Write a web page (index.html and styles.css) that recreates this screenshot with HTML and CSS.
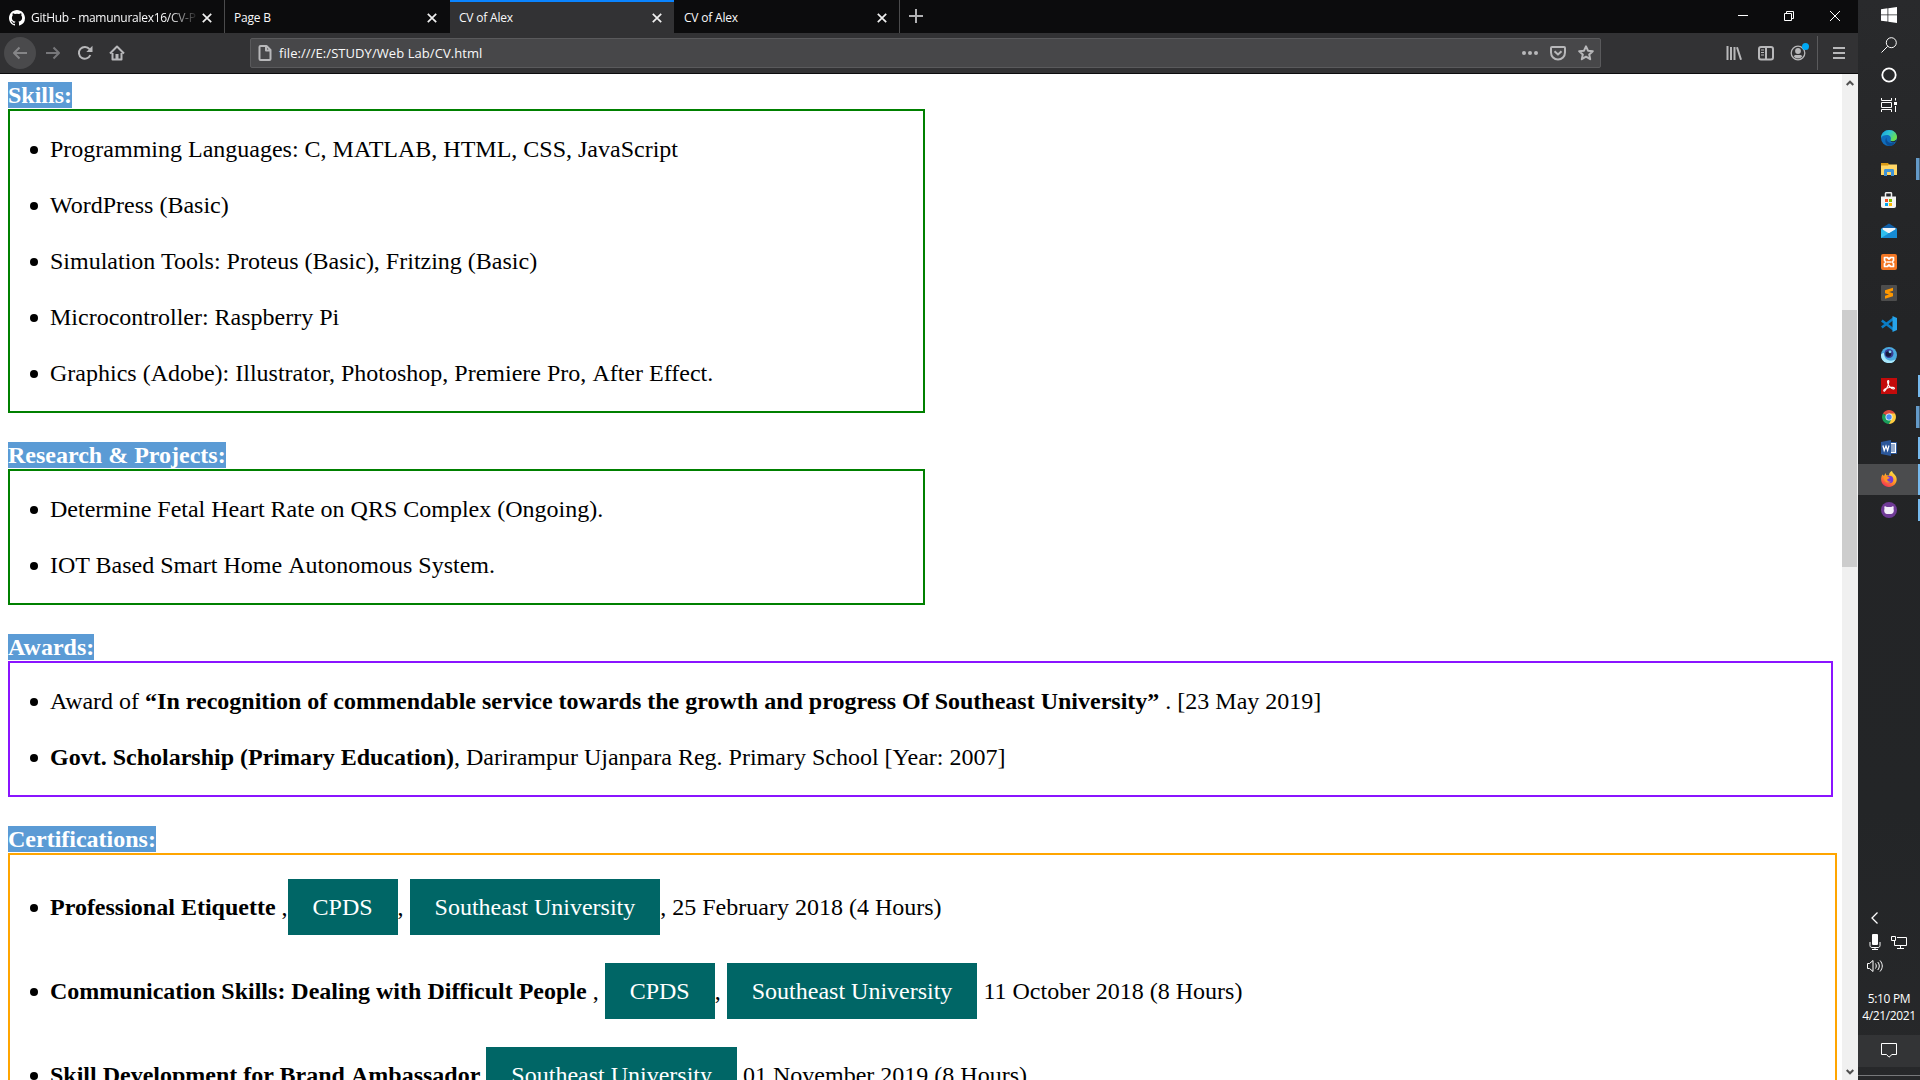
FILE: index.html
```html
<!DOCTYPE html>
<html lang="en">
<head>
<meta charset="utf-8">
<title>CV of Alex</title>
<link rel="stylesheet" href="styles.css">
</head>
<body>
<div class="screen">
  <div class="browser">
    <header class="tabs">
      <div class="tab">
        <svg class="tab-logo" viewBox="0 0 16 16"><path fill="#fff" fill-rule="evenodd" d="M8 0C3.6 0 0 3.6 0 8c0 3.5 2.3 6.5 5.5 7.6.4.1.5-.2.5-.4v-1.4c-2.2.5-2.7-1-2.7-1-.4-.9-.9-1.2-.9-1.2-.7-.5.1-.5.1-.5.8.1 1.2.8 1.2.8.7 1.3 1.9.9 2.3.7.1-.5.3-.9.5-1.1-1.8-.2-3.6-.9-3.6-4 0-.9.3-1.6.8-2.1-.1-.2-.4-1 .1-2.1 0 0 .7-.2 2.2.8a7.6 7.6 0 0 1 4 0c1.5-1 2.2-.8 2.2-.8.4 1.1.2 1.9.1 2.1.5.6.8 1.3.8 2.1 0 3.1-1.9 3.8-3.7 4 .3.3.6.8.6 1.5v2.2c0 .2.1.5.6.4A8 8 0 0 0 16 8c0-4.4-3.6-8-8-8z"/></svg>
        <span class="tab-title fade">GitHub - mamunuralex16/CV-P</span>
        <svg class="tab-close" viewBox="0 0 10 10"><path d="M.8.8l8.4 8.4M9.2.8L.8 9.2"/></svg>
      </div>
      <div class="tab divided">
        <span class="tab-title">Page B</span>
        <svg class="tab-close" viewBox="0 0 10 10"><path d="M.8.8l8.4 8.4M9.2.8L.8 9.2"/></svg>
      </div>
      <div class="tab active">
        <span class="tab-title">CV of Alex</span>
        <svg class="tab-close" viewBox="0 0 10 10"><path d="M.8.8l8.4 8.4M9.2.8L.8 9.2"/></svg>
      </div>
      <div class="tab last">
        <span class="tab-title">CV of Alex</span>
        <svg class="tab-close" viewBox="0 0 10 10"><path d="M.8.8l8.4 8.4M9.2.8L.8 9.2"/></svg>
      </div>
      <svg class="new-tab" viewBox="0 0 14 14"><path d="M7 0v14M0 7h14"/></svg>
      <div class="window-buttons">
        <svg viewBox="0 0 10 10"><path d="M0 4.5h10"/></svg>
        <svg viewBox="0 0 10 10"><path d="M.5 2.5h7v7h-7zM2.5 2.5v-2h7v7h-2"/></svg>
        <svg viewBox="0 0 10 10"><path d="M0 0l10 10M10 0L0 10"/></svg>
      </div>
    </header>

    <nav class="toolbar">
      <span class="back"><svg class="icon" viewBox="0 0 16 16"><path stroke="#858587" d="M15 8H2M7.500 2.500L2 8l5.500 5.500"/></svg></span>
      <svg class="icon forward" viewBox="0 0 16 16"><path stroke="#77777a" d="M1 8h13M8.500 2.500L14 8l-5.500 5.500"/></svg>
      <svg class="icon reload" viewBox="0 0 16 16"><path d="M13.300 10A5.900 5.900 0 1 1 12.500 4.200"/><path class="solid" d="M15.500.8v6.200H9.300z"/></svg>
      <svg class="icon home" viewBox="0 0 16 16"><path d="M1 8.500L8 1.500l7 7M3.500 8v6.500h9V8"/><path class="solid" d="M6.500 9h3v5.500h-3z"/></svg>
      <div class="urlbar">
        <svg class="icon page" viewBox="0 0 16 16"><path d="M3.500 1h6l4 4v9c0 .6-.4 1-1 1h-9c-.6 0-1-.4-1-1V2c0-.6.4-1 1-1zM9 1v4.500h4.500"/></svg>
        <span class="url">file:///E:/STUDY/Web Lab/CV.html</span>
        <svg class="icon" viewBox="0 0 16 16"><circle class="solid" cx="2" cy="8" r="2"/><circle class="solid" cx="8" cy="8" r="2"/><circle class="solid" cx="14" cy="8" r="2"/></svg>
        <svg class="icon" viewBox="0 0 16 16"><path d="M2 2h12c.6 0 1 .4 1 1v4.500a7 7 0 0 1-14 0V3c0-.6.4-1 1-1zM4.500 6.300L8 9.600l3.500-3.300"/></svg>
        <svg class="icon" viewBox="0 0 16 16"><path d="M8 1.300l2 4.400 4.800.5-3.600 3.200 1 4.800L8 11.700l-4.200 2.500 1-4.800L1.200 6.200 6 5.700z"/></svg>
      </div>
      <div class="tools">
        <svg class="icon" viewBox="0 0 16 16"><path d="M1.500 1v14M5 2v13M8.500 2v13M11 2.200l4 12.600"/></svg>
        <svg class="icon" viewBox="0 0 16 16"><rect x="1" y="2" width="14" height="12.500" rx="2"/><path d="M8 2v12.500"/><path stroke-width="1" d="M3 5h3M3 7.500h3M3 10h3"/></svg>
        <span class="account">
          <svg class="icon" viewBox="0 0 16 16"><circle cx="8" cy="8" r="6.800" stroke-width="1.300"/><circle class="solid" cx="8" cy="6" r="2.900"/><path class="solid" d="M3.600 11.200c1.200-1.800 2.600-1.200 4.400-1.200s3.200-.6 4.400 1.200A5.400 5.400 0 0 1 8 13.400a5.400 5.400 0 0 1-4.400-2.200z"/></svg>
          <i class="account-dot"></i>
        </span>
        <span class="tool-divider"></span>
        <svg class="icon menu" viewBox="0 0 12 12"><path d="M0 1h12M0 6h12M0 11h12"/></svg>
      </div>
    </nav>

    <div class="viewport">
      <main class="document">
        <h2><mark>Skills:</mark></h2>
        <ul class="box green">
          <li>Programming Languages: C, MATLAB, HTML, CSS, JavaScript</li>
          <li>WordPress (Basic)</li>
          <li>Simulation Tools: Proteus (Basic), Fritzing (Basic)</li>
          <li>Microcontroller: Raspberry Pi</li>
          <li>Graphics (Adobe): Illustrator, Photoshop, Premiere Pro, <span class="unkern">After</span> Effect.</li>
        </ul>
        <h2><mark>Research &amp; Projects:</mark></h2>
        <ul class="box green">
          <li>Determine Fetal Heart Rate on QRS Complex (Ongoing).</li>
          <li>IOT Based Smart Home <span class="unkern">Autonomous</span> System.</li>
        </ul>
        <h2><mark>Awards:</mark></h2>
        <ul class="box purple">
          <li>Award of <b>“In recognition of commendable service towards the growth and progress Of Southeast University”</b> . [23 May 2019]</li>
          <li><b>Govt. Scholarship (Primary Education)</b>, Darirampur Ujanpara Reg. Primary School [Year: 2007]</li>
        </ul>
        <h2><mark>Certifications:</mark></h2>
        <ul class="box orange">
          <li><b>Professional Etiquette</b> ,<a class="link">CPDS</a>, <a class="link">Southeast University</a>, 25 February 2018 (4 Hours)</li>
          <li><b>Communication Skills: Dealing with Difficult People</b> , <a class="link">CPDS</a>, <a class="link">Southeast University</a> 11 October 2018 (8 Hours)</li>
          <li><b>Skill Development for Brand <span class="unkern">Ambassador</span></b> <a class="link">Southeast University</a> 01 November 2019 (8 Hours)</li>
        </ul>
      </main>
      <div class="scrollbar">
        <svg viewBox="0 0 8 6"><path d="M.7 5L4 1.700 7.300 5"/></svg>
        <span class="thumb"></span>
        <svg viewBox="0 0 8 6"><path d="M.7 1L4 4.300 7.300 1"/></svg>
      </div>
    </div>
  </div>

  <aside class="taskbar">
    <div class="system">
      <svg viewBox="0 0 16 16"><path fill="#fff" d="M0 2.200L6.500 1.300v6.200H0zM7.300 1.200L16 0v7.500H7.300zM0 8.300h6.500v6.200L0 13.700zM7.300 8.300H16V16l-8.700-1.300z"/></svg>
      <svg class="line" viewBox="0 0 16 16"><circle cx="10.300" cy="5.700" r="5"/><path d="M6.700 9.300L.5 15.500"/></svg>
      <svg class="line" viewBox="0 0 16 16"><circle cx="8" cy="8" r="6.700" stroke-width="1.800"/></svg>
      <svg class="line" viewBox="0 0 16 16"><path d="M.5 1v2.500h10V1M.5 15v-2.500h10V15M.5 5.500h10v5H.5zM14.500 1v2.500M14.500 9v6"/><path fill="#fff" stroke="none" d="M13 5h3v3h-3z"/></svg>
    </div>
    <div class="apps">
      <div class="app"><svg viewBox="0 0 16 16"><defs><linearGradient id="eg" x1="0" y1="0" x2="1" y2=".5"><stop offset="0" stop-color="#159edb"/><stop offset=".5" stop-color="#2dc2d4"/><stop offset="1" stop-color="#6be04d"/></linearGradient></defs><circle cx="8" cy="8" r="8" fill="#0f6dbd"/><path fill="url(#eg)" d="M0 8C.2 3 4 0 8 0c5 0 8 3.500 8 7 0 3-2.500 4.200-4.700 4.200-1.600 0-2.300-.7-1.500-1.700C10.500 7 8.500 5 6 5 3 5 .8 6.300 0 8z"/><path fill="#0b4d94" d="M5.500 7.500c-.5 4 3 6 6.500 5.500 1 0 2-.5 2.500-.7C13 14.700 10.500 16 8.500 16 5 15 3 11 5.500 7.500z"/><path fill="#252628" d="M15 11.300c-2 1.600-5 1.200-5.500-.5.600.6 3.800 1 6.200-1.300z"/></svg></div>
      <div class="app stacked"><svg viewBox="0 0 16 16"><path fill="#d99a16" d="M0 2h7l1.500 2H16v4H0z"/><path fill="#ffd767" d="M0 4.500h7L8 3.500h8V14H0z"/><path fill="#3f93d8" d="M3 9.500C3 8.700 3.500 8 4.500 8h7c1 0 1.500.7 1.500 1.500V15h-3v-4H6v4H3z"/></svg></div>
      <div class="app"><svg viewBox="0 0 16 16"><path fill="none" stroke="#eee" stroke-width="1.500" d="M4.500 5V1.500c0-.5.300-.8.800-.8h4.400c.5 0 .8.300.8.800V5"/><path fill="#f3f3f3" d="M0 4.500h15V14c0 1-.6 2-2 2H2c-1.400 0-2-1-2-2z"/><path fill="#f25022" d="M4 7h3v3H4z"/><path fill="#7fba00" d="M8 7h3v3H8z"/><path fill="#00a4ef" d="M4 11h3v3H4z"/><path fill="#ffb900" d="M8 11h3v3H8z"/></svg></div>
      <div class="app"><svg viewBox="0 0 16 16"><path fill="#1260a8" d="M0 5.500L8 .5l8 5V10H0z"/><path fill="#f2f5f8" d="M1.500 5h13v5h-13z"/><path fill="#2fc0f0" d="M0 5.500l8 5 8-5V15H0z"/><path fill="#168bd3" d="M0 15L16 5.500V15z"/></svg></div>
      <div class="app"><svg viewBox="0 0 16 16"><rect width="16" height="16" rx="2" fill="#f37623"/><path fill="none" stroke="#fff" stroke-width="1.700" stroke-linejoin="round" d="M3.500 3.500h2.800L8 5l1.700-1.500h2.800v3L11 8l1.500 1.500v3H9.700L8 11l-1.700 1.500H3.500v-3L5 8 3.500 6.500zM6 8h4"/></svg></div>
      <div class="app"><svg viewBox="0 0 16 16"><rect width="16" height="16" rx="1" fill="#4d4d4d"/><path fill="#ff9800" d="M4 5.200L12 2.700v3L8 7l4 1.300v3L4 13.700v-3L8 9.500 4 8.200z"/></svg></div>
      <div class="app"><svg viewBox="0 0 16 16"><path fill="none" stroke="#0b7dc5" stroke-width="2.600" d="M12.500 2.500L.8 11.500M.8 4.500l11.700 9"/><path fill="#27a3ea" d="M11.500 0L16 2v12l-4.500 2z"/></svg></div>
      <div class="app"><svg viewBox="0 0 16 16"><circle cx="8" cy="8" r="8" fill="#4ba9df"/><path fill="#a9e8fb" d="M0 8a8 8 0 0 0 15 4c-3 2-6 2-8 1C4 12 3 9 3 6 1 6 0 7 0 8z"/><circle cx="8" cy="6.500" r="4.500" fill="#3b3f94"/><circle cx="7.500" cy="7" r="2.800" fill="#17183a"/><circle cx="9" cy="4.800" r="1.400" fill="#80d8f5"/></svg></div>
      <div class="app open"><svg viewBox="0 0 16 16"><path fill="#c30b0b" d="M0 0h16v16H0z"/><path fill="none" stroke="#fff" stroke-width="1.100" d="M7.300 2.500c-1.200 0-.8 2.500.2 4.500 1.500 3 4.500 4.500 5.700 3.700 1.300-1.200-3-1.900-6-1-3 .8-5 2.300-4.400 3.300.8 1 3-2.500 4.200-5.500.8-2.500 1.200-5 .3-5z"/></svg></div>
      <div class="app stacked"><svg viewBox="0 0 16 16"><g transform="translate(1 1) scale(.875)"><path fill="#dd4b3e" d="M8 8L1.100 4A8 8 0 0 1 14.900 4z"/><path fill="#ffcd40" d="M8 8V4h6.900A8 8 0 0 1 8 16z"/><path fill="#1a9f5b" d="M1.100 4L8 8l3 2-3 6A8 8 0 0 1 1.100 4z"/><circle cx="8" cy="8" r="4" fill="#f5f5f5"/><circle cx="8" cy="8" r="3.100" fill="#4a8df6"/></g></svg></div>
      <div class="app open"><svg viewBox="0 0 16 16"><path fill="#fff" stroke="#2b579a" d="M8 2.500h7.500v11H8z"/><path stroke="#2b579a" stroke-width="1.200" d="M10 5h4M10 7h4M10 9h4M10 11h4"/><path fill="#2b579a" d="M0 2l10-2v16L0 14z"/><path fill="none" stroke="#fff" stroke-width="1.200" d="M1.900 5.500l1.300 5L5 6l1.600 4.500L8 5.500"/></svg></div>
      <div class="app open current"><svg viewBox="0 0 16 16"><defs><linearGradient id="fx" x1=".8" y1="0" x2=".2" y2="1"><stop offset="0" stop-color="#ffe84a"/><stop offset=".5" stop-color="#ff9a22"/><stop offset="1" stop-color="#f5245c"/></linearGradient></defs><path fill="url(#fx)" d="M1.500 3.500L3 5l1.500-3 .8 2.300L8 4.500C8 2 9.500.5 11 0c.2 2 2.500 2.800 4 5.500 2.300 5-1.500 10.500-7 10.500S-.8 11 .3 6.500C.5 5 1 4 1.500 3.500z"/><circle cx="8.500" cy="8.500" r="3.800" fill="#743bd6"/><path fill="#ff9426" d="M2.500 5.500C5 4.500 7 5.500 9 7c-1.500 0-1.800 1.200-3 1.500C6 10 8 11 10 10.500 8 13 3 12 2.500 5.500z"/></svg></div>
      <div class="app open"><svg viewBox="0 0 16 16"><circle cx="8" cy="8" r="8" fill="#6f3a96"/><path fill="#f4effa" d="M3.800 4l2 1h4.400l2-1c.6 1.300.6 2 .3 2.700 1 3-.5 5.300-2.500 5.300H6c-2 0-3.500-2.300-2.500-5.300C3.200 6 3.200 5.300 3.800 4z"/></svg></div>
    </div>
    <div class="tray">
      <svg class="line" viewBox="0 0 16 16"><path stroke-width="1.300" d="M10.500 2.500L5 8l5.500 5.500"/></svg>
      <span></span>
      <svg class="line" viewBox="0 0 16 16"><rect x="5" y="0" width="6" height="11" rx="1" fill="#fff" stroke="none"/><path d="M3 8v3.500c0 1 .7 2 2 2h6c1.300 0 2-1 2-2V8M8 14v2M5 15.500h6"/></svg>
      <svg class="line" viewBox="0 0 16 16"><path d="M6 3.500h9.500v8h-12V7M.5 2.500h4v4h-4zM9.500 11.500v3M6 14.500h7"/></svg>
      <svg class="line" viewBox="0 0 16 16"><path d="M.5 5.500h2l3.500-3v11l-3.500-3h-2zM8.500 5.500c1 1.500 1 3.500 0 5M10.800 4c2 2.500 2 5.500 0 8M13 2.500c3 3.500 3 7.500 0 11"/></svg>
    </div>
    <div class="clock"><span>5:10 PM</span><span>4/21/2021</span></div>
    <div class="notifications"><svg class="line" viewBox="0 0 16 16"><path d="M.5 1.500h15v11H11L8 15.200 5.500 12.500h-5z"/></svg></div>
    <div class="desktop-edge"></div>
  </aside>
</div>
</body>
</html>
```
FILE: styles.css
```css
* { box-sizing: border-box; }
body { margin: 0; overflow: hidden; background: #fff; }
svg { display: block; flex: none; }

.screen { display: flex; width: 1920px; height: 1080px; overflow: hidden; }
.browser { display: flex; flex-direction: column; width: 1858px; height: 1080px; }

/* tab strip */
.tabs { display: flex; flex: none; height: 33px; background: #0c0c0d; color: #f9f9fa; font: 12px/18px "Open Sans", "Noto Sans", sans-serif; }
.tab { display: flex; align-items: center; width: 225px; padding: 2px 12px 0 9px; border-right: 1px solid transparent; }
.tab:first-child { border-right-color: #4b4b4c; }
.tab.divided { padding-right: 13px; border-right: 0; }
.tab.active { width: 224px; background: #323234; border-top: 2px solid #0a84ff; border-right: 0; padding-top: 0; }
.tab.last { width: 226px; padding-left: 10px; border-right-color: #4b4b4c; }
.tab-logo { width: 16px; height: 16px; margin-right: 6px; }
.tab-title { flex: 1; min-width: 0; overflow: hidden; white-space: nowrap; letter-spacing: -0.2px; }
.fade { margin-right: 3px; letter-spacing: -0.28px; -webkit-mask-image: linear-gradient(to right, #000 82%, transparent); mask-image: linear-gradient(to right, #000 82%, transparent); }
.tab-close { width: 10px; height: 10px; fill: none; stroke: #f0f0f0; stroke-width: 1.7; }
.new-tab { width: 14px; height: 14px; margin: 9px 0 0 9px; stroke: #b1b1b3; stroke-width: 2; }
.window-buttons { display: flex; gap: 36px; margin: 11px 18px 0 auto; }
.window-buttons svg { width: 10px; height: 10px; fill: none; stroke: #fff; stroke-width: 1; }

/* navigation bar */
.toolbar { display: flex; align-items: center; flex: none; height: 41px; padding: 0 13px 1px 4px; background: #323234; border-bottom: 1px solid #0c0c0d; }
.icon { width: 16px; height: 16px; fill: none; stroke: #b8b8ba; stroke-width: 2; stroke-linejoin: round; }
.icon .solid { fill: #b8b8ba; stroke: none; }
.back { display: grid; place-items: center; width: 32px; height: 32px; border-radius: 50%; background: #4a4a4c; }
.forward { margin-left: 9px; }
.reload, .home { margin-left: 16px; }
.urlbar { display: flex; align-items: center; gap: 12px; width: 1351px; height: 30px; margin-left: 125px; padding: 0 6px; background: #474749; border: 1px solid #5a5a5c; border-radius: 2px; }
.page { flex: none; }
.url { flex: 1; margin-left: -6px; color: #f9f9fa; font: 13px/20px "Open Sans", "Noto Sans", sans-serif; letter-spacing: 0.07px; }
.tools { display: flex; align-items: center; gap: 16px; margin-left: auto; }
.account { position: relative; }
.account-dot { position: absolute; top: -2px; right: -3px; width: 7px; height: 7px; border-radius: 50%; background: #00a9f4; }
.tool-divider { width: 1px; height: 34px; margin-left: -5px; background: #5a5a5c; }
.menu { width: 12px; height: 12px; margin: 0 0 0 -1px; }

/* document */
.viewport { display: flex; flex: 1; min-height: 0; overflow: hidden; }
.document { width: 1842px; height: 1006px; padding: 7px 5px 0 8px; overflow: hidden; color: #000; font: 24px/28px "Liberation Serif", "Times New Roman", serif; }
h2 { height: 28px; margin: 0; font-size: 24px; font-weight: bold; }
ul + h2 { margin-top: 28px; }
mark { display: inline-block; height: 26px; margin-top: 1px; line-height: 26px; vertical-align: top; background: #5b9bd5; color: #fff; }
.box { display: flex; flex-direction: column; gap: 28px; margin: 0; padding: 24px 0 24px 40px; border: 2px solid; list-style: none; }
.box li { white-space: nowrap; }
.box li::before { content: ""; display: inline-block; width: 8px; height: 8px; margin: 0 12px 0 -20px; vertical-align: 3px; border-radius: 50%; background: #000; }
.green { width: 917px; border-color: #008000; }
.purple { width: 1825px; border-color: #8a14ff; }
.orange { width: 1829px; border-color: #ffa500; }
.link { display: inline-block; padding: 14px 25px; background: #006666; color: #fff; }
/* keeps the full word gap before a capital A */
.unkern { margin-left: 0.1px; }

.scrollbar { display: flex; flex-direction: column; align-items: center; width: 16px; padding: 6px 0 5px; background: #f0f0f0; }
.scrollbar svg { width: 8px; height: 6px; fill: none; stroke: #505050; stroke-width: 2; }
.thumb { width: 15px; height: 257px; margin: 224px 1px auto 0; background: #cdcdcd; }

/* vertical taskbar */
.taskbar { display: flex; flex-direction: column; width: 62px; height: 1080px; background: linear-gradient(#292a2c, #232426 30%, #232527 75%, #27282a); }
.taskbar svg { width: 16px; height: 16px; }
.line { fill: none; stroke: #fff; stroke-width: 1; }
.system { display: flex; flex-direction: column; align-items: center; gap: 14px; padding-top: 7px; }
.apps { margin-top: 10px; }
.app { position: relative; display: flex; justify-content: center; height: 31px; padding-top: 7px; }
.current { background: #4b4c4e; }
.open::after, .stacked::after { content: ""; position: absolute; top: 4px; right: 0; width: 2px; height: 22px; background: #76b9ed; }
.stacked::after { width: 4px; background: linear-gradient(to right, #649ac8 3px, #42617b 3px); }
.current::after { top: 0; height: 31px; }
.tray { display: grid; grid-template-columns: 16px 16px; gap: 8px; margin: auto 0 0 9px; }
.clock { display: flex; flex-direction: column; align-items: center; height: 34px; margin-top: 16px; color: #fff; font: 12px/17px "Open Sans", "Noto Sans", sans-serif; letter-spacing: -0.35px; }
.notifications { display: flex; justify-content: center; height: 32px; margin-top: 11px; padding-top: 7px; background: #333436; }
.desktop-edge { height: 13px; background: linear-gradient(transparent 8px, #77787a 8px, #77787a 9px, transparent 9px); }
```
